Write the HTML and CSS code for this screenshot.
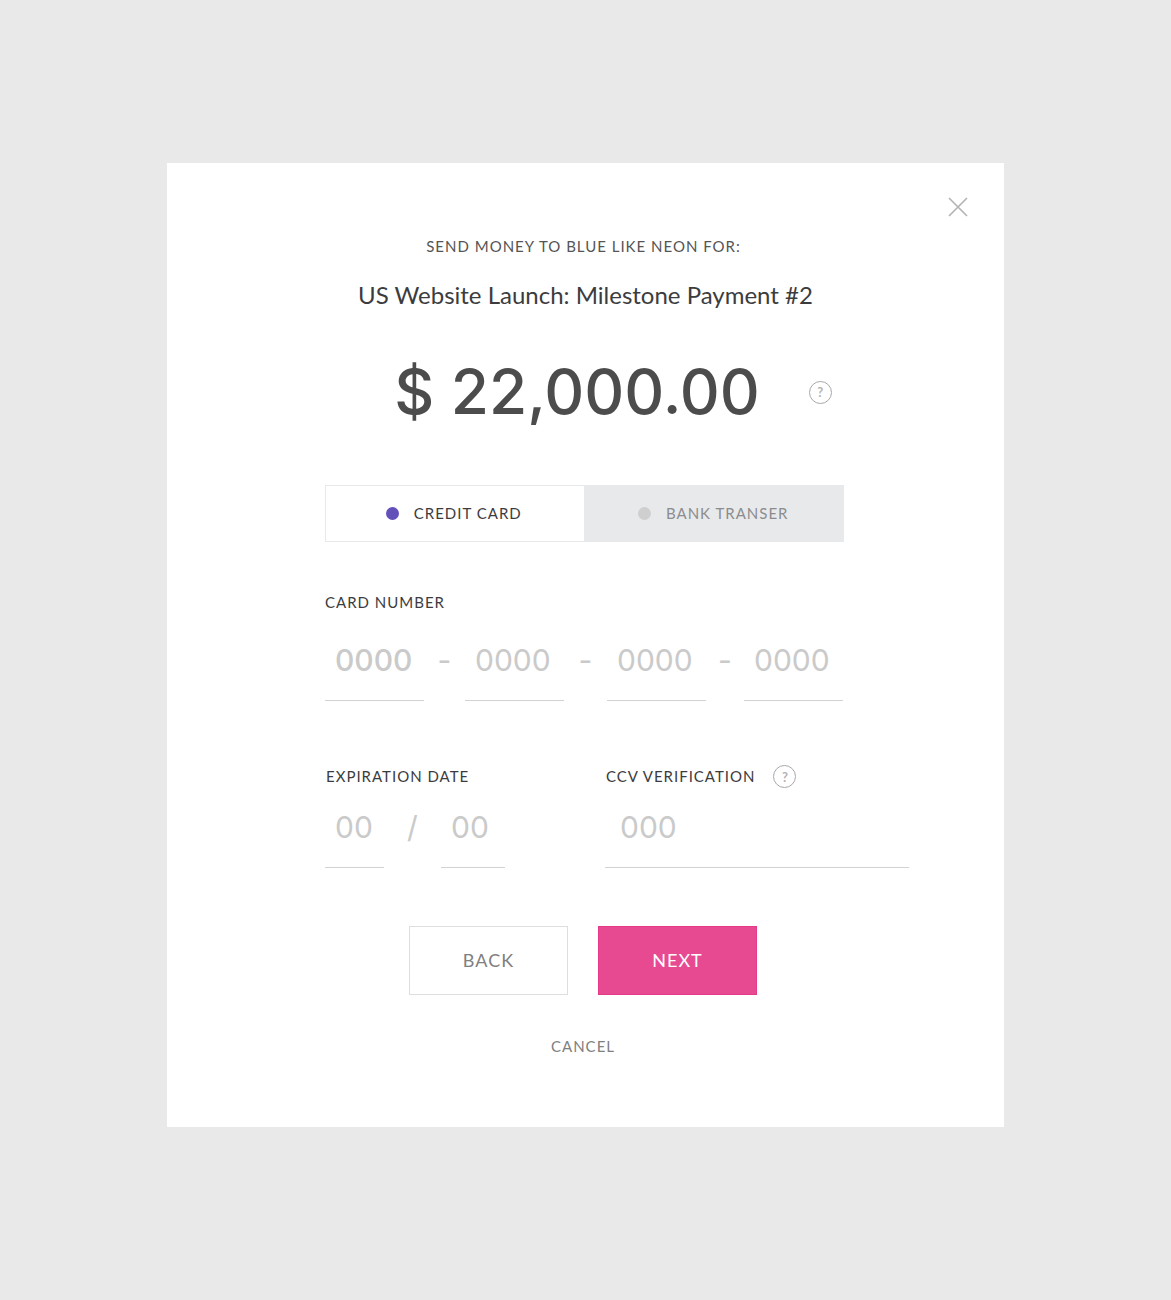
FILE: index.html
```html
<!DOCTYPE html>
<html lang="en">
<head>
<meta charset="utf-8">
<meta name="viewport" content="width=device-width, initial-scale=1">
<title>Send money</title>
<link rel="stylesheet" href="styles.css">
</head>
<body>
<main class="dialog">
  <div class="dialog-bar">
    <button class="icon-button" type="button" aria-label="Close">
      <svg width="20" height="20" viewBox="0 0 20 20" fill="none" stroke="#b4b4b4" stroke-width="1.7"><path d="M1 1l18 18M19 1L1 19"/></svg>
    </button>
  </div>
  <header class="summary">
    <p class="eyebrow">SEND MONEY TO BLUE LIKE NEON FOR:</p>
    <h1 class="title">US Website Launch: Milestone Payment #2</h1>
  </header>
  <form class="payment">
    <div class="amount-row">
      <output class="amount">$ 22,000.00</output>
      <button class="help" type="button" aria-label="About this amount">?</button>
    </div>
    <div class="methods" role="radiogroup" aria-label="Payment method">
      <label class="method"><input class="dot" type="radio" name="method" checked><span class="method-name">CREDIT CARD</span></label>
      <label class="method"><input class="dot" type="radio" name="method"><span class="method-name">BANK TRANSER</span></label>
    </div>
    <label class="label" for="card-1">CARD NUMBER</label>
    <div class="card-number">
      <input class="field field-current" id="card-1" type="text" placeholder="0000" maxlength="4">
      <span class="separator">-</span>
      <input class="field" type="text" placeholder="0000" maxlength="4" aria-label="Card number, second group">
      <span class="separator">-</span>
      <input class="field" type="text" placeholder="0000" maxlength="4" aria-label="Card number, third group">
      <span class="separator">-</span>
      <input class="field" type="text" placeholder="0000" maxlength="4" aria-label="Card number, fourth group">
    </div>
    <div class="details">
      <div>
        <div class="label-row"><label class="label" for="month">EXPIRATION DATE</label></div>
        <div class="expiry">
          <input class="field" id="month" type="text" placeholder="00" maxlength="2">
          <span class="separator">/</span>
          <input class="field" type="text" placeholder="00" maxlength="2" aria-label="Expiration year">
        </div>
      </div>
      <div>
        <div class="label-row">
          <label class="label" for="ccv">CCV VERIFICATION</label>
          <button class="help" type="button" aria-label="About the CCV">?</button>
        </div>
        <input class="field field-wide" id="ccv" type="text" placeholder="000" maxlength="3">
      </div>
    </div>
  </form>
  <footer class="actions">
    <div class="buttons">
      <button class="button" type="button">BACK</button>
      <button class="button button-primary" type="submit">NEXT</button>
    </div>
    <a class="cancel" href="#">CANCEL</a>
  </footer>
</main>
</body>
</html>
```
FILE: styles.css
```css
* {
  box-sizing: border-box;
}

body {
  margin: 0;
  padding: 163px 24px;
  background: #e9e9e9;
  color: #3c3c3e;
  font-family: Lato, "Open Sans", sans-serif;
  font-size: 15px;
  line-height: 20px;
}

button,
input {
  font: inherit;
  color: inherit;
}

button {
  cursor: pointer;
}

.dialog {
  max-width: 837px;
  margin: 0 auto;
  padding: 34px 0 71px;
  background: #fff;
}

.dialog-bar {
  display: flex;
  justify-content: flex-end;
  padding-right: 36px;
}

.icon-button {
  display: flex;
  padding: 0;
  border: 0;
  background: none;
}

.summary {
  padding-top: 19px;
  text-align: center;
}

.eyebrow {
  margin: 0;
  padding-right: 4px;
  color: #555;
  letter-spacing: 1px;
}

.title {
  margin: 23px 0 0;
  font-size: 24px;
  font-weight: 400;
  line-height: 32px;
}

.payment {
  padding: 41px 95px 0 158px;
}

.amount-row {
  display: flex;
  align-items: center;
  justify-content: center;
  gap: 49px;
  padding-right: 8px;
}

.amount {
  color: #4c4c4d;
  font-family: Inter, sans-serif;
  font-size: 62px;
  font-weight: 500;
  line-height: 80px;
}

.help {
  width: 23px;
  height: 23px;
  padding: 0;
  border: 1px solid #a8a8a8;
  border-radius: 50%;
  background: none;
  color: #b4b4b4;
  font-size: 13px;
  font-weight: 700;
  line-height: 20px;
}

.methods {
  display: grid;
  grid-template-columns: 1fr 1fr;
  max-width: 519px;
  margin: 53px 0 50px;
}

.method {
  display: flex;
  align-items: center;
  justify-content: center;
  gap: 15px;
  height: 57px;
  padding-right: 2px;
  border: 1px solid #e8e9eb;
  background: #e8e9eb;
  color: #8c8c8e;
  letter-spacing: 1px;
}

.method:has(:checked) {
  background: #fff;
  color: #3c3c3e;
}

.method-name {
  padding-bottom: 2px;
}

.dot {
  appearance: none;
  width: 13px;
  height: 13px;
  margin: 0;
  border-radius: 50%;
  background: #cfcfcf;
}

.dot:checked {
  background: #6350b9;
}

.label {
  letter-spacing: 1px;
}

.card-number {
  display: grid;
  grid-template-columns: 99px 41px 99px 43px 99px 38px 99px;
  margin-top: 19px;
}

.field {
  width: 100%;
  height: 70px;
  padding: 0 0 12px 10px;
  border: 0;
  border-bottom: 1px solid #d2d2d2;
  border-radius: 0;
  background: none;
  font-family: Inter, sans-serif;
  font-size: 30px;
}

.field::placeholder {
  color: #cacaca;
  opacity: 1;
}

.field-current {
  font-weight: 500;
}

.separator {
  color: #cacaca;
  font-family: Inter, sans-serif;
  font-size: 30px;
  line-height: 58px;
  text-align: center;
}

.details {
  display: grid;
  grid-template-columns: 280px 1fr;
  margin-top: 64px;
}

.label-row {
  display: flex;
  align-items: center;
  gap: 18px;
  height: 23px;
  margin-bottom: 10px;
  padding-left: 1px;
}

.label-row .label {
  padding-bottom: 2px;
}

.expiry {
  display: grid;
  grid-template-columns: 59px 57px 64px;
}

.field-wide {
  padding-left: 15px;
}

.actions {
  display: flex;
  flex-direction: column;
  align-items: center;
  gap: 41px;
  padding: 58px 5px 0 0;
}

.buttons {
  display: flex;
  gap: 30px;
}

.button {
  width: 159px;
  height: 69px;
  padding: 0 0 2px;
  border: 1px solid #dedede;
  background: #fff;
  color: #808080;
  font-size: 18px;
  letter-spacing: 1px;
}

.button-primary {
  border-color: #e5398a;
  background: #e84a92;
  color: #fff;
}

.cancel {
  color: #808080;
  letter-spacing: 1px;
  text-decoration: none;
}
```
